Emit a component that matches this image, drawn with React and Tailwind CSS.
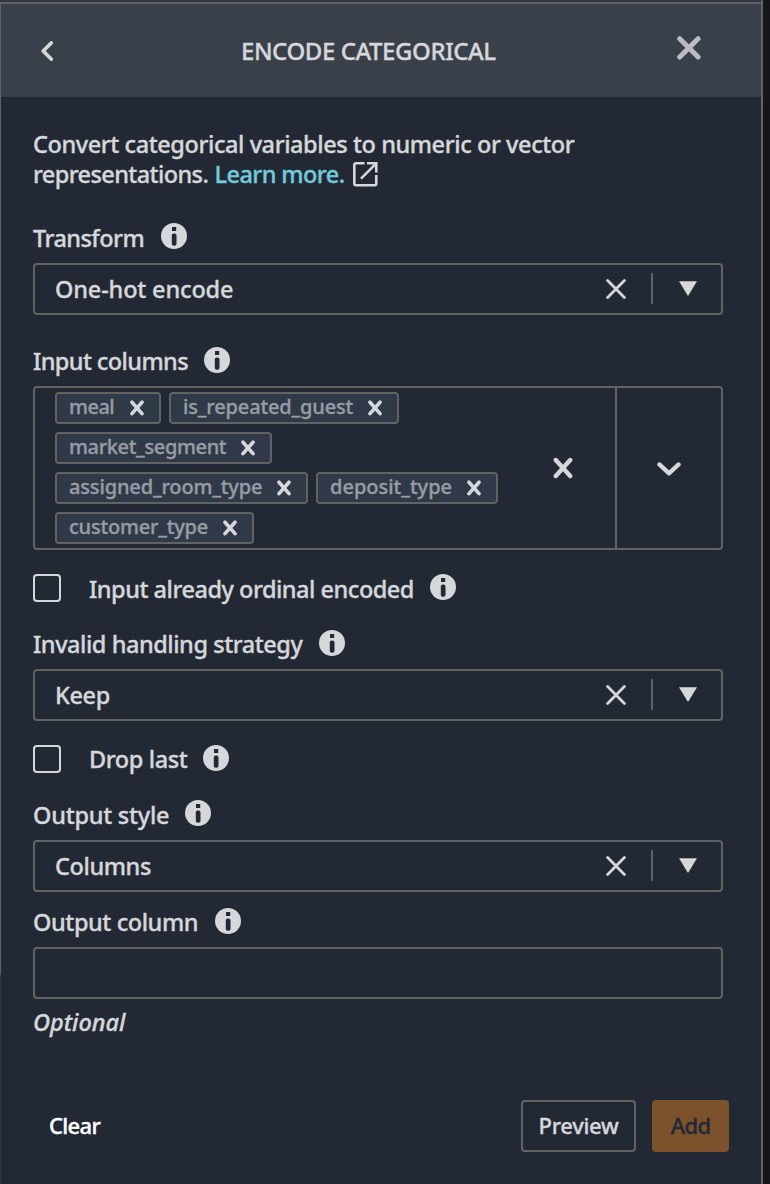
function InfoIcon({ className = "" }) {
  return (
    <svg viewBox="0 0 26 26" className={`h-[26px] w-[26px] shrink-0 ${className}`}>
      <circle cx="13" cy="13" r="13" fill="#d5d7da" />
      <rect x="11" y="4" width="4.2" height="4" fill="#232934" />
      <rect x="10.8" y="10.6" width="4.7" height="12.2" rx="2" fill="#232934" />
    </svg>
  );
}

function Caption({ text, width, iconTop = "", className = "" }) {
  return (
    <div className={`flex h-[30px] items-start whitespace-nowrap ${className}`}>
      <span className={width}>{text}</span>
      <InfoIcon className={iconTop} />
    </div>
  );
}

function Select({ value, spacing = "", className = "" }) {
  return (
    <div className={`flex h-[52px] w-full items-start rounded-[4px] border-2 border-[#626262] ${className}`}>
      <span className={`grow pt-[9px] pl-5 ${spacing}`}>{value}</span>
      <svg viewBox="0 0 20 20" className="mt-[14px] mr-[25px] h-5 w-5" stroke="#d5d7da" strokeWidth="2.8" strokeLinecap="round">
        <path d="M1.6 1.6L18.4 18.4M18.4 1.6L1.6 18.4" />
      </svg>
      <span className="mt-2 h-[31px] w-0.5 bg-[#626262]" />
      <svg viewBox="0 0 18 15" className="mt-4 mr-[24px] ml-[26px] h-[15px] w-[18px]" fill="#d5d7da">
        <path d="M0 0.3H18L9 15Z" />
      </svg>
    </div>
  );
}

function Chip({ text, width, spacing = "tracking-[-0.15px]" }) {
  return (
    <div className={`flex h-8 items-start justify-between rounded-[4px] border-2 border-[#626262] bg-[#303948] pr-[15px] pl-3 ${width}`}>
      <span className={`text-[20px] leading-[26px] text-[#979ca3] ${spacing}`}>{text}</span>
      <svg viewBox="0 0 14 16" className="mt-[6px] h-4 w-[14px]" stroke="#d5d7da" strokeWidth="3.6" strokeLinecap="round">
        <path d="M2 2.2L12 13.6M12 2.2L2 13.6" />
      </svg>
    </div>
  );
}

function CheckRow({ text, width, textTop = "", iconTop = "", className = "" }) {
  return (
    <div className={`flex h-[30px] items-start whitespace-nowrap ${className}`}>
      <span className="h-7 w-7 shrink-0 rounded-[4px] border-2 border-[#d5d7da]" />
      <span className={`ml-7 ${textTop} ${width}`}>{text}</span>
      <InfoIcon className={iconTop} />
    </div>
  );
}

export default function App() {
  return (
    <div className="flex h-[1184px] w-[770px] overflow-hidden bg-[#15171c] font-['Noto_Sans','Open_Sans',sans-serif] text-[23.5px] leading-[30px] font-medium tracking-[-0.45px] text-[#d5d7da] [-webkit-text-stroke:0.35px]">
      <div className="flex w-px flex-col bg-[#2f394a]">
        <div className="mt-0.5 h-[973px] bg-[#626262]" />
      </div>
      <div className="flex w-[762px] flex-col border-r-2 border-[#626262] bg-[#232934]">
        <div className="h-0.5 bg-[#303848]" />
        <header className="flex h-[95px] items-start border-t-2 border-[#626262] bg-[#394049]">
          <svg viewBox="0 0 12 20" className="mt-[37px] ml-10 h-5 w-3" fill="none" stroke="#d5d7da" strokeWidth="3.6" strokeLinecap="round" strokeLinejoin="round">
            <path d="M10.2 1.9L2.2 10L10.2 18.1" />
          </svg>
          <h1 className="mt-8 ml-[188px] w-[435px] text-[24px] tracking-[-0.44px] whitespace-nowrap">ENCODE CATEGORICAL</h1>
          <svg viewBox="0 0 24 24" className="mt-8 ml-px h-6 w-6" stroke="#b9bcc2" strokeWidth="5" strokeLinecap="round">
            <path d="M2.7 2.7L21.1 21.1M21.1 2.7L2.7 21.1" />
          </svg>
        </header>

        <main className="ml-8 flex w-[690px] flex-col pt-8">
          <p className="tracking-[-0.42px] whitespace-nowrap">Convert categorical variables to numeric or vector</p>
          <div className="flex items-start whitespace-nowrap">
            <span className="w-[181.5px] tracking-[-0.6px]">representations.</span>
            <a className="w-[138.5px] tracking-[-0.57px] text-[#71cbdc]">Learn more.</a>
            <svg viewBox="0 0 25 25" className="mt-[3px] h-[25px] w-[25px]" fill="none" stroke="#d5d7da" strokeWidth="2.6">
              <path d="M11.5 1.3H3Q1.3 1.3 1.3 3V21.6Q1.3 23.3 3 23.3H21.6Q23.3 23.3 23.3 21.6V13M14 1.3H23.3V10.5M23 1.6L8 16.6" />
            </svg>
          </div>

          <Caption text="Transform" width="w-[128px] tracking-[-0.55px]" className="mt-[34px]" />
          <Select value="One-hot encode" spacing="tracking-[-0.16px]" className="mt-2.5" />

          <Caption text="Input columns" width="w-[171px] tracking-[-0.6px]" iconTop="mt-px" className="mt-[31px]" />
          <div className="mt-2.5 flex h-[164px] rounded-[4px] border-2 border-[#626262]">
            <div className="flex grow flex-col gap-2 pt-1 pl-5">
              <div className="flex gap-2">
                <Chip text="meal" width="w-[106px]" spacing="tracking-[-0.5px]" />
                <Chip text="is_repeated_guest" width="w-[230px]" />
              </div>
              <Chip text="market_segment" width="w-[217px]" spacing="tracking-[-0.35px]" />
              <div className="flex gap-2">
                <Chip text="assigned_room_type" width="w-[253px]" />
                <Chip text="deposit_type" width="w-[182px]" spacing="tracking-normal" />
              </div>
              <Chip text="customer_type" width="w-[199px]" spacing="tracking-[-0.2px]" />
            </div>
            <svg viewBox="0 0 20 22" className="mt-[69px] mr-[42px] h-[22px] w-5" stroke="#d5d7da" strokeWidth="4.4" strokeLinecap="round">
              <path d="M2.8 3L17.2 19M17.2 3L2.8 19" />
            </svg>
            <div className="flex w-[106px] justify-center border-l-2 border-[#626262]">
              <svg viewBox="0 0 24 14" className="mt-[74px] h-[14px] w-6" fill="none" stroke="#d5d7da" strokeWidth="4.2" strokeLinecap="round" strokeLinejoin="round">
                <path d="M2.4 2.4L12 11.4L21.6 2.4" />
              </svg>
            </div>
          </div>

          <CheckRow text="Input already ordinal encoded" width="w-[341px] tracking-[-0.48px]" className="mt-6" />
          <Caption text="Invalid handling strategy" width="w-[286px]" iconTop="mt-px" className="mt-[25px]" />
          <Select value="Keep" spacing="tracking-[-0.4px]" className="mt-2.5" />

          <CheckRow text="Drop last" width="w-[114px] tracking-[-0.4px]" textTop="-mt-px" className="mt-6" />
          <Caption text="Output style" width="w-[152px] tracking-[-0.25px]" className="mt-[25px]" />
          <Select value="Columns" spacing="tracking-[-0.4px]" className="mt-2.5" />

          <Caption text="Output column" width="w-[182px] tracking-[-0.42px]" iconTop="mt-px" className="mt-[15px]" />
          <div className="mt-2.5 h-[52px] rounded-[4px] border-2 border-[#626262]" />
          <p className="mt-2 tracking-normal italic">Optional</p>
        </main>

        <footer className="mt-[63px] ml-12 flex h-[52px] w-[680px] items-start text-[22px]">
          <button className="mt-[10px] h-[30px] tracking-[-0.65px] text-white">Clear</button>
          <button className="ml-auto h-[52px] w-[115px] rounded-[4px] border-2 border-[#626262] pb-0.5 tracking-[-0.3px]">Preview</button>
          <button className="ml-4 h-[52px] w-[77px] rounded-[4px] bg-[#7c522d] pb-0.5 tracking-[-0.65px] text-[#232934]">Add</button>
        </footer>
      </div>
    </div>
  );
}
